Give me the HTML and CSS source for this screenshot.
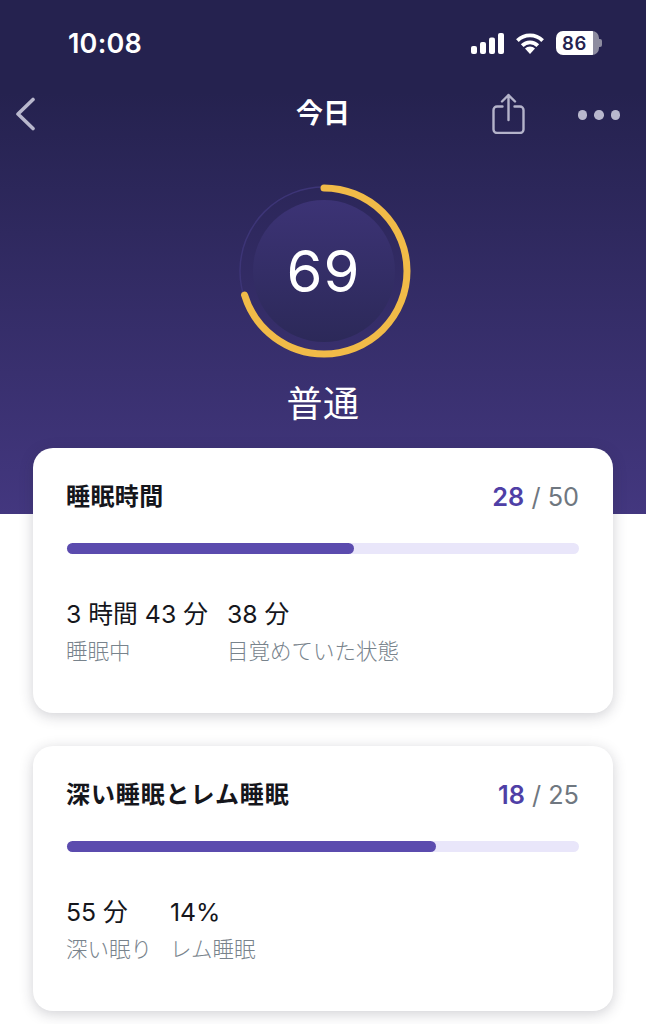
FILE: index.html
```html
<!DOCTYPE html>
<html lang="ja">
<head>
    <meta charset="UTF-8">
    <meta name="viewport" content="width=device-width, initial-scale=1.0">
    <title>今日</title>
    <link rel="stylesheet" href="styles.css">
</head>
<body>
    <header class="hero">
        <div class="status-bar">
            <span class="clock">10:08</span>
            <div class="status-icons">
                <svg class="signal" width="33" height="21" viewBox="0 0 33 21" fill="#fff">
                    <rect x="0" y="13" width="6" height="8" rx="2"/>
                    <rect x="9" y="9" width="6" height="12" rx="2"/>
                    <rect x="18" y="4.5" width="6" height="16.5" rx="2"/>
                    <rect x="27" y="0" width="6" height="21" rx="2"/>
                </svg>
                <svg class="wifi" width="28" height="21" viewBox="0 0 28 21" fill="none" stroke="#fff" stroke-width="3.8">
                    <path d="M1.4 7.6a18 18 0 0 1 25.2 0"/>
                    <path d="M6.2 12.6a11 11 0 0 1 15.6 0"/>
                    <path d="M9 15.6 14 21l5-5.4a7 7 0 0 0-10 0z" fill="#fff" stroke="none"/>
                </svg>
                <div class="battery"><span>86</span></div>
            </div>
        </div>

        <nav class="nav-bar">
            <svg class="back" width="22" height="34" viewBox="0 0 22 34" fill="none" stroke="#b9b8cd" stroke-width="3.6" stroke-linecap="round" stroke-linejoin="round">
                <path d="M18 2.5 3 17l15 14.5"/>
            </svg>
            <h1>今日</h1>
            <svg class="share" width="33" height="41" viewBox="0 0 33 41" fill="none" stroke="#b4b3ca" stroke-width="2.4" stroke-linecap="round" stroke-linejoin="round">
                <path d="M10.5 13.5H5a3.5 3.5 0 0 0-3.500 3.500v19.500a3.500 3.500 0 0 0 3.500 3.500h23a3.500 3.500 0 0 0 3.500-3.500V17a3.500 3.500 0 0 0-3.500-3.500h-5.500"/>
                <path d="M16.500 27V2M10 8.500l6.500-6.500 6.500 6.500"/>
            </svg>
            <div class="more"><i></i><i></i><i></i></div>
        </nav>

        <div class="score">
            <svg class="ring" width="180" height="180" viewBox="0 0 180 180">
                <defs>
                    <linearGradient id="core" x1="0" y1="0" x2="0" y2="1">
                        <stop offset="0" stop-color="#3c3375"/>
                        <stop offset="1" stop-color="#2c2959"/>
                    </linearGradient>
                </defs>
                <circle cx="90" cy="90" r="84" fill="none" stroke="#3d3577" stroke-width="1.5"/>
                <circle cx="90" cy="90" r="71" fill="url(#core)"/>
                <circle class="ring-value" cx="90" cy="90" r="83" pathLength="100" transform="rotate(-90 90 90)"/>
            </svg>
            <span class="score-number">69</span>
        </div>
        <p class="score-label">普通</p>
    </header>

    <main class="cards">
        <section class="card">
            <div class="card-head">
                <h2>睡眠時間</h2>
                <div class="points"><b>28</b> / 50</div>
            </div>
            <div class="bar"><div class="bar-fill" style="width: 56%"></div></div>
            <div class="stats">
                <div class="stat">
                    <div class="stat-value">3 時間 43 分</div>
                    <div class="stat-name">睡眠中</div>
                </div>
                <div class="stat">
                    <div class="stat-value">38 分</div>
                    <div class="stat-name">目覚めていた状態</div>
                </div>
            </div>
        </section>

        <section class="card card-deep">
            <div class="card-head">
                <h2>深い睡眠とレム睡眠</h2>
                <div class="points"><b>18</b> / 25</div>
            </div>
            <div class="bar"><div class="bar-fill" style="width: 72%"></div></div>
            <div class="stats">
                <div class="stat">
                    <div class="stat-value">55 分</div>
                    <div class="stat-name">深い眠り</div>
                </div>
                <div class="stat">
                    <div class="stat-value">14%</div>
                    <div class="stat-name">レム睡眠</div>
                </div>
            </div>
        </section>
    </main>
</body>
</html>
```

FILE: styles.css
```css
* {
    box-sizing: border-box;
}
html, body {
    height: 1024px;
    overflow: hidden;
}
body {
    margin: 0;
    background: #fff;
    font-family: Inter, "Noto Sans CJK JP", sans-serif;
    color: #15161c;
}
.hero {
    height: 514px;
    padding-top: 28px;
    background: linear-gradient(180deg, #25224f 0%, #25224f 18%, #43377f 100%);
    color: #fff;
}
.status-bar {
    display: flex;
    justify-content: space-between;
    align-items: center;
    height: 30px;
    padding: 0 47px 0 68px;
}
.clock {
    font-size: 27px;
    font-weight: 600;
    letter-spacing: 0.2px;
}
.status-icons {
    display: flex;
    align-items: center;
    gap: 12px;
}
.battery {
    position: relative;
    width: 43px;
    height: 24px;
    border-radius: 7px;
    background: linear-gradient(90deg, #fff 0%, #fff 86%, #8d8ca0 86%);
    color: #25224f;
    font-size: 18.5px;
    font-weight: 600;
    line-height: 24px;
    padding-left: 6px;
    letter-spacing: 0.6px;
}
.battery::after {
    content: "";
    position: absolute;
    right: -3px;
    top: 8px;
    width: 3px;
    height: 8px;
    border-radius: 0 2px 2px 0;
    background: #8d8ca0;
}
.nav-bar {
    display: flex;
    align-items: center;
    height: 44px;
    margin-top: 35px;
    padding: 0 26px 0 15px;
    position: relative;
}
.nav-bar h1 {
    position: absolute;
    left: 0;
    right: 0;
    top: 3px;
    margin: 0;
    text-align: center;
    font-size: 27px;
    line-height: 36px;
    font-weight: 700;
}
.back {
    margin-top: -3px;
}
.share {
    margin-left: auto;
    margin-top: -3px;
}
.more {
    display: flex;
    gap: 7px;
    margin-left: 53px;
}
.more i {
    display: block;
    width: 9.5px;
    height: 9.5px;
    border-radius: 50%;
    background: #b9b8cd;
}
.score {
    position: relative;
    width: 180px;
    height: 180px;
    margin: 44px auto 0;
    display: flex;
    align-items: center;
    justify-content: center;
    left: 0.5px;
}
.ring {
    position: absolute;
    inset: 0;
}
.ring-value {
    fill: none;
    stroke: #f1bb48;
    stroke-width: 7;
    stroke-linecap: round;
    stroke-dasharray: 70.3 100;
}
.score-number {
    position: relative;
    font-size: 58px;
    font-weight: 400;
    letter-spacing: 1px;
}
.score-label {
    margin: 18px 0 0;
    text-align: center;
    font-size: 36px;
    line-height: 50px;
    letter-spacing: 0.5px;
}
.cards {
    display: flex;
    flex-direction: column;
    gap: 33px;
    margin: -66px 33px 0;
    position: relative;
}
.card {
    height: 265px;
    padding: 31px 34px 0;
    background: #fff;
    border-radius: 20px;
    box-shadow: 0 3px 14px rgba(40, 40, 60, 0.22);
}
.card-head {
    display: flex;
    justify-content: space-between;
    align-items: center;
    height: 34px;
}
.card-head h2 {
    margin: -3px 0 0 -1px;
    font-size: 24px;
    font-weight: 600;
    letter-spacing: 0.4px;
}
.card-deep h2 {
    letter-spacing: 0.9px;
}
.points {
    font-size: 25.3px;
    color: #6f7780;
}
.points b {
    font-weight: 600;
    color: #4f3fa6;
}
.bar {
    height: 11px;
    margin-top: 30px;
    border-radius: 6px;
    background: #e9e6fa;
}
.bar-fill {
    height: 100%;
    border-radius: 6px;
    background: #5b4bae;
}
.stats {
    display: flex;
    gap: 19px;
    margin: 42px 0 0 -1px;
}
.card-deep .stats {
    gap: 18px;
}
.stat-value {
    font-size: 24.8px;
    line-height: 36px;
}
.stat-name {
    margin-top: 4px;
    font-size: 21.5px;
    line-height: 30px;
    font-weight: 300;
    color: #78838c;
}
```
